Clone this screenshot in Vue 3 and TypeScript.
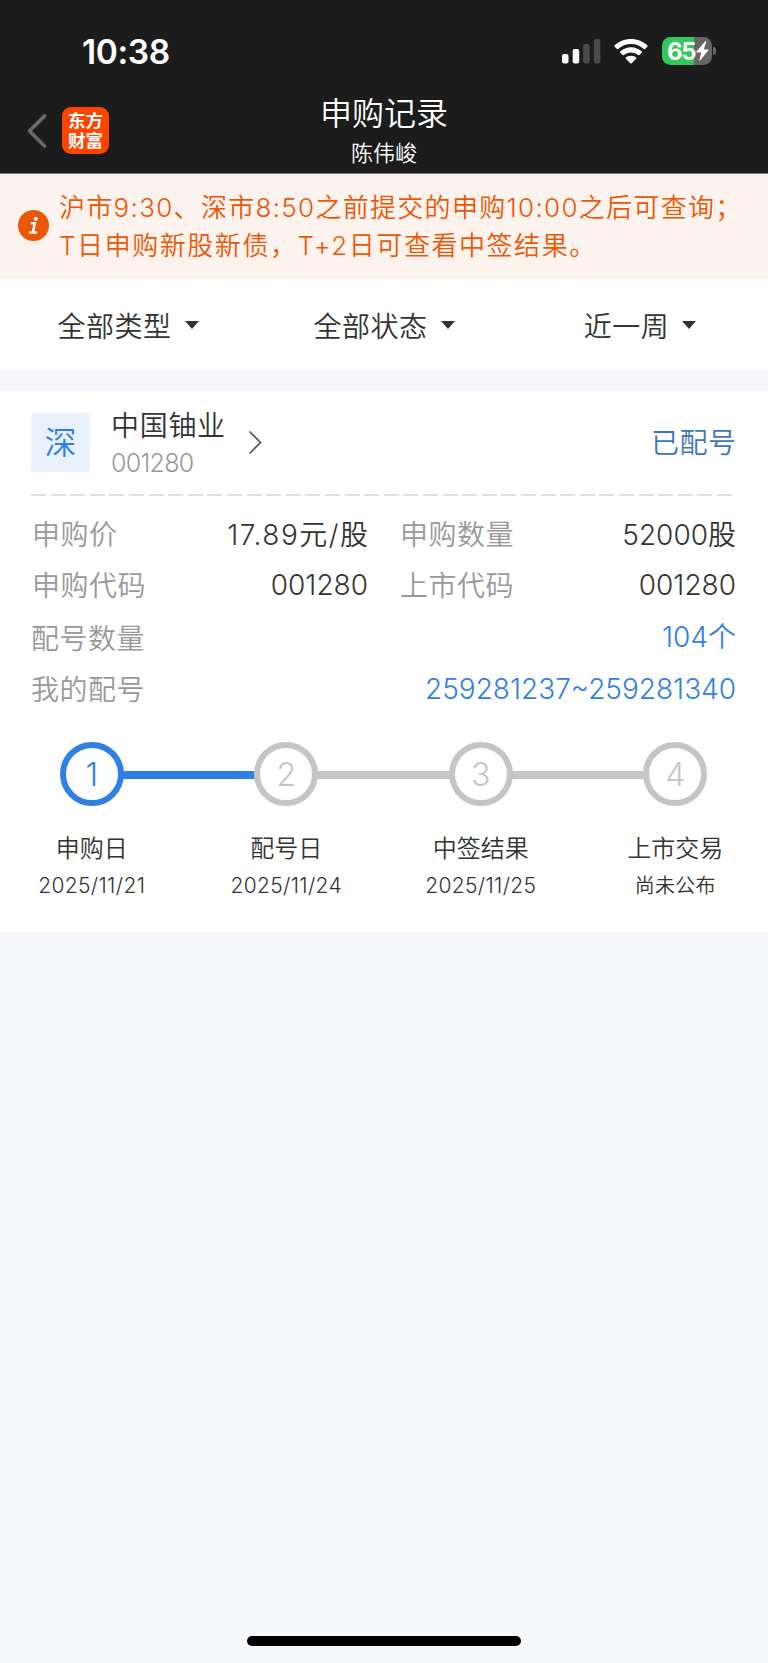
<script setup lang="ts">
interface Filter {
  label: string
}
interface Field {
  label: string
  value: string
}
interface Step {
  title: string
  date: string
  done: boolean
}

const filters: Filter[] = [{ label: '全部类型' }, { label: '全部状态' }, { label: '近一周' }]

const pairs: Field[] = [
  { label: '申购价', value: '17.89元/股' },
  { label: '申购数量', value: '52000股' },
  { label: '申购代码', value: '001280' },
  { label: '上市代码', value: '001280' },
]

const links: Field[] = [
  { label: '配号数量', value: '104个' },
  { label: '我的配号', value: '259281237~259281340' },
]

const steps: Step[] = [
  { title: '申购日', date: '2025/11/21', done: true },
  { title: '配号日', date: '2025/11/24', done: false },
  { title: '中签结果', date: '2025/11/25', done: false },
  { title: '上市交易', date: '尚未公布', done: false },
]

const isNumeric = (text: string): boolean => /^[\d/~]+$/.test(text)
</script>

<template>
  <div class="page">
    <header class="top">
      <div class="status">
        <span class="time">10:38</span>
        <div class="indicators">
          <svg class="signal" width="39" height="25" viewBox="0 0 39 25">
            <rect x="0" y="15" width="6.5" height="9.5" rx="2" fill="#fff" />
            <rect x="10.7" y="10" width="6.5" height="14.5" rx="2" fill="#fff" />
            <rect x="21.2" y="5" width="6.5" height="19.5" rx="2" fill="#4b4b4b" />
            <rect x="31.8" y="0" width="6.5" height="24.5" rx="2" fill="#4b4b4b" />
          </svg>
          <svg class="wifi" width="34" height="25" viewBox="0 0 34 25">
            <path d="M17 0C23.500 0 29.300 2.500 33.400 6.500Q34 7.100 33.400 7.700L31 10.100Q30.400 10.600 29.800 10.100C26.400 6.900 22 5 17 5C12 5 7.600 6.900 4.200 10.100Q3.600 10.600 3 10.100L.6 7.700Q0 7.100 .6 6.500C4.700 2.500 10.500 0 17 0Z" fill="#fff" />
            <path d="M17 8.300C21.200 8.300 25 9.900 27.800 12.500Q28.300 13.100 27.800 13.700L25.300 16.100Q24.700 16.600 24.100 16.100C22.200 14.400 19.700 13.400 17 13.400C14.300 13.400 11.800 14.400 9.900 16.100Q9.300 16.600 8.700 16.100L6.200 13.700Q5.700 13.100 6.200 12.500C9 9.900 12.800 8.300 17 8.300Z" fill="#fff" />
            <path d="M17 16.700C19 16.700 20.800 17.400 22.100 18.500Q22.700 19.100 22.100 19.700L17.700 24.200Q17 24.800 16.300 24.200L11.900 19.700Q11.300 19.100 11.900 18.500C13.200 17.400 15 16.700 17 16.700Z" fill="#fff" />
          </svg>
          <div class="battery">
            <span class="level">65</span>
            <svg class="bolt" width="13" height="20" viewBox="0 0 13 20">
              <path d="M9.300 .3L.5 10.600Q.1 11.400 1 11.400H5.400L3.300 18.800Q3.200 20 4.200 19.300L12.500 9.300Q12.900 8.500 12 8.500H7.700L10.200 1Q10.300 -.2 9.300 .3Z" fill="#fff" />
            </svg>
            <i class="nub"></i>
          </div>
        </div>
      </div>
      <div class="nav">
        <div class="left">
          <svg class="back" width="20" height="36" viewBox="0 0 20 36">
            <path d="M17.500 3L2.500 18L17.500 33" fill="none" stroke="#696969" stroke-width="3.600" stroke-linecap="round" stroke-linejoin="round" />
          </svg>
          <div class="logo">东方<br />财富</div>
        </div>
        <div class="heading">
          <h1>申购记录</h1>
          <p>陈伟峻</p>
        </div>
      </div>
    </header>

    <section class="notice">
      <svg class="info" width="31" height="31" viewBox="0 0 31 31">
        <circle cx="15.500" cy="15.500" r="15.500" fill="#ec5706" />
        <circle cx="17.800" cy="8.800" r="2.100" fill="#fff" />
        <path d="M12.800 13.200H16.800L14.900 22.500M11.300 22.400H18.800" fill="none" stroke="#fff" stroke-width="2.500" />
      </svg>
      <p>
        <span class="line first">沪市9:30、深市8:50之前提交的申购10:00之后可查询；</span>
        <span class="line second">T日申购新股新债，T+2日可查看中签结果。</span>
      </p>
    </section>

    <nav class="filters">
      <button v-for="f in filters" :key="f.label" type="button">
        <span>{{ f.label }}</span>
        <svg width="14" height="8" viewBox="0 0 14 8"><path d="M0 0H14L7 8Z" fill="#333" /></svg>
      </button>
    </nav>

    <article class="card">
      <div class="stock">
        <span class="market">深</span>
        <div class="names">
          <strong>中国铀业</strong>
          <small>001280</small>
        </div>
        <svg class="more" width="15" height="25" viewBox="0 0 15 25">
          <path d="M1.500 1.500L12.500 12.500L1.500 23.500" fill="none" stroke="#555" stroke-width="1.700" />
        </svg>
        <span class="state">已配号</span>
      </div>
      <div class="dash"></div>
      <dl class="pairs">
        <div v-for="p in pairs" :key="p.label">
          <dt>{{ p.label }}</dt>
          <dd :class="{ numeric: isNumeric(p.value) }">{{ p.value }}</dd>
        </div>
      </dl>
      <dl class="links">
        <div v-for="l in links" :key="l.label">
          <dt>{{ l.label }}</dt>
          <dd :class="{ numeric: isNumeric(l.value) }">{{ l.value }}</dd>
        </div>
      </dl>
      <ol class="steps">
        <li v-for="(s, i) in steps" :key="s.title" :class="{ done: s.done }">
          <div class="track"><b>{{ i + 1 }}</b></div>
          <span class="title">{{ s.title }}</span>
          <span class="date" :class="{ numeric: isNumeric(s.date) }">{{ s.date }}</span>
        </li>
      </ol>
    </article>

    <footer><i class="home"></i></footer>
  </div>
</template>

<style>
body {
  margin: 0;
  background: #f6f8fb;
}
</style>

<style scoped>
.page {
  display: flex;
  flex-direction: column;
  width: 768px;
  height: 1663px;
  overflow: hidden;
  background: #f6f8fb;
  color: #333;
  font-family: Inter, "Noto Sans CJK SC", sans-serif;
  font-weight: 350;
}
h1, p, dl, dd, ol {
  margin: 0;
  padding: 0;
}
.top {
  box-sizing: border-box;
  height: 174px;
  background: #1c1c1c;
  border-bottom: 1px solid #777;
  color: #fff;
}
.status {
  display: flex;
  justify-content: space-between;
  height: 92px;
  padding: 0 52px 0 82px;
}
.time {
  padding-top: 32px;
  font-size: 33.500px;
  font-weight: 600;
  line-height: 41px;
  letter-spacing: -0.400px;
}
.indicators {
  display: flex;
  align-items: flex-start;
}
.signal {
  margin: 39px 13px 0 0;
}
.wifi {
  margin: 39px 14px 0 0;
}
.battery {
  position: relative;
  display: flex;
  align-items: center;
  width: 49.500px;
  height: 28px;
  margin: 37px 4.500px 0 0;
  border-radius: 8.500px;
  background: linear-gradient(90deg, #34c759 32.500px, #666 32.500px);
}
.level {
  width: 27.500px;
  margin-left: 5px;
  padding-top: 1px;
  font-size: 24px;
  font-weight: 700;
  line-height: 28px;
  letter-spacing: -1.300px;
  white-space: nowrap;
}
.bolt {
  margin-left: 1.500px;
}
.nub {
  position: absolute;
  right: -4.500px;
  top: 10px;
  width: 3px;
  height: 8px;
  border-radius: 0 4px 4px 0;
  background: #666;
}
.nav {
  display: grid;
  grid-template-columns: 1fr auto 1fr;
}
.left {
  display: flex;
  align-items: flex-start;
  padding: 15px 0 0 27px;
}
.back {
  margin: 6px 15px 0 0;
}
.logo {
  box-sizing: border-box;
  width: 47px;
  height: 47px;
  padding-top: 3px;
  border-radius: 9px;
  background: #ff4400;
  font-family: "Noto Sans CJK SC", sans-serif;
  font-size: 17.500px;
  font-weight: 700;
  line-height: 19.500px;
  text-align: center;
}
.heading {
  display: flex;
  flex-direction: column;
  align-items: center;
}
h1 {
  padding-top: 1px;
  font-size: 32px;
  font-weight: 350;
  line-height: 42px;
}
.heading p {
  font-size: 22px;
  line-height: 36px;
}
.notice {
  display: flex;
  align-items: flex-start;
  height: 105px;
  background: #fdf3ee;
  color: #ec5706;
}
.info {
  flex: none;
  margin: 36px 0 0 18px;
}
.notice p {
  padding: 15px 0 0 10px;
  font-size: 26px;
  line-height: 37.500px;
  letter-spacing: 1.300px;
}
.line {
  display: block;
  white-space: nowrap;
}
.second {
  letter-spacing: 1.550px;
}
.filters {
  display: flex;
  height: 92px;
  background: #fff;
}
.filters button {
  display: flex;
  flex: 1;
  align-items: center;
  justify-content: center;
  gap: 13px;
  padding: 0;
  border: 0;
  background: none;
  color: inherit;
  font: inherit;
  font-size: 28px;
  letter-spacing: 0.500px;
}
.card {
  margin-top: 20px;
  height: 541px;
  background: #fff;
}
.stock {
  display: flex;
  align-items: center;
  height: 103px;
  padding: 0 32px 0 31px;
}
.market {
  width: 59px;
  height: 59px;
  border-radius: 4px;
  background: #e9f1fc;
  color: #2f80e4;
  font-size: 32px;
  line-height: 59px;
  text-align: center;
}
.names {
  display: flex;
  flex-direction: column;
  margin-left: 21px;
}
.names strong {
  font-size: 28px;
  font-weight: 350;
  line-height: 40px;
  letter-spacing: 0.700px;
}
.names small {
  color: #999;
  font-size: 25px;
  line-height: 34px;
  letter-spacing: -0.700px;
}
.more {
  margin-left: 22px;
}
.state {
  margin: 0 -0.500px 3px auto;
  color: #3f74b6;
  font-size: 28px;
  letter-spacing: 0.500px;
}
.dash {
  height: 2px;
  margin: 0 35px 0 31px;
  background: repeating-linear-gradient(90deg, #e0e0e0 0 15px, transparent 15px 19.600px);
}
.pairs {
  display: grid;
  grid-template-columns: 337px 336px;
  column-gap: 32px;
  padding: 11px 32px 1px 31px;
}
.pairs > div,
.links > div {
  display: flex;
  align-items: center;
  justify-content: space-between;
  height: 51.500px;
  font-size: 28px;
  white-space: nowrap;
}
dt {
  color: #999;
  letter-spacing: 0.500px;
}
dd.numeric {
  padding-top: 2px;
}
.pairs > div:first-child dd {
  margin-right: -1.500px;
  letter-spacing: 1.500px;
}
.pairs > div:nth-child(odd) dt {
  padding-left: 1px;
}
.links {
  padding: 0 32px 0 31px;
}
.links dd {
  color: #2f80e4;
}
.links > div:first-child dd {
  padding-bottom: 3px;
}
.steps {
  display: grid;
  grid-template-columns: repeat(4, 194.500px);
  margin-left: -5.500px;
  padding-top: 27.500px;
  list-style: none;
}
.steps li {
  display: flex;
  flex-direction: column;
  align-items: center;
}
.track {
  display: grid;
  grid-template-columns: 1fr 64px 1fr;
  align-items: center;
  width: 100%;
}
.track::before,
.track::after {
  content: "";
  height: 8px;
  margin-top: 2px;
  background: #c5c5c5;
}
.track::before {
  margin-right: -1px;
}
.track::after {
  margin-left: -1px;
}
.steps li:first-child .track::before,
.steps li:last-child .track::after {
  background: none;
}
.done .track::after,
.done + li .track::before {
  background: #2f80e4;
}
.track b {
  box-sizing: border-box;
  height: 64px;
  border: 6px solid #c5c5c5;
  border-radius: 50%;
  color: #c5c5c5;
  font-size: 32px;
  font-weight: 300;
  line-height: 53px;
  text-align: center;
}
.done .track b {
  border-color: #2f80e4;
  color: #2f80e4;
}
.title {
  margin-top: 25px;
  font-size: 24px;
  line-height: 36px;
}
.date {
  margin-top: 1px;
  font-size: 20px;
  line-height: 36px;
  letter-spacing: 0.300px;
}
.date.numeric {
  font-size: 21px;
  letter-spacing: 0.350px;
}
footer {
  display: flex;
  justify-content: center;
  margin-top: auto;
  padding-bottom: 17px;
}
.home {
  width: 274px;
  height: 10px;
  border-radius: 5px;
  background: #000;
}
</style>
